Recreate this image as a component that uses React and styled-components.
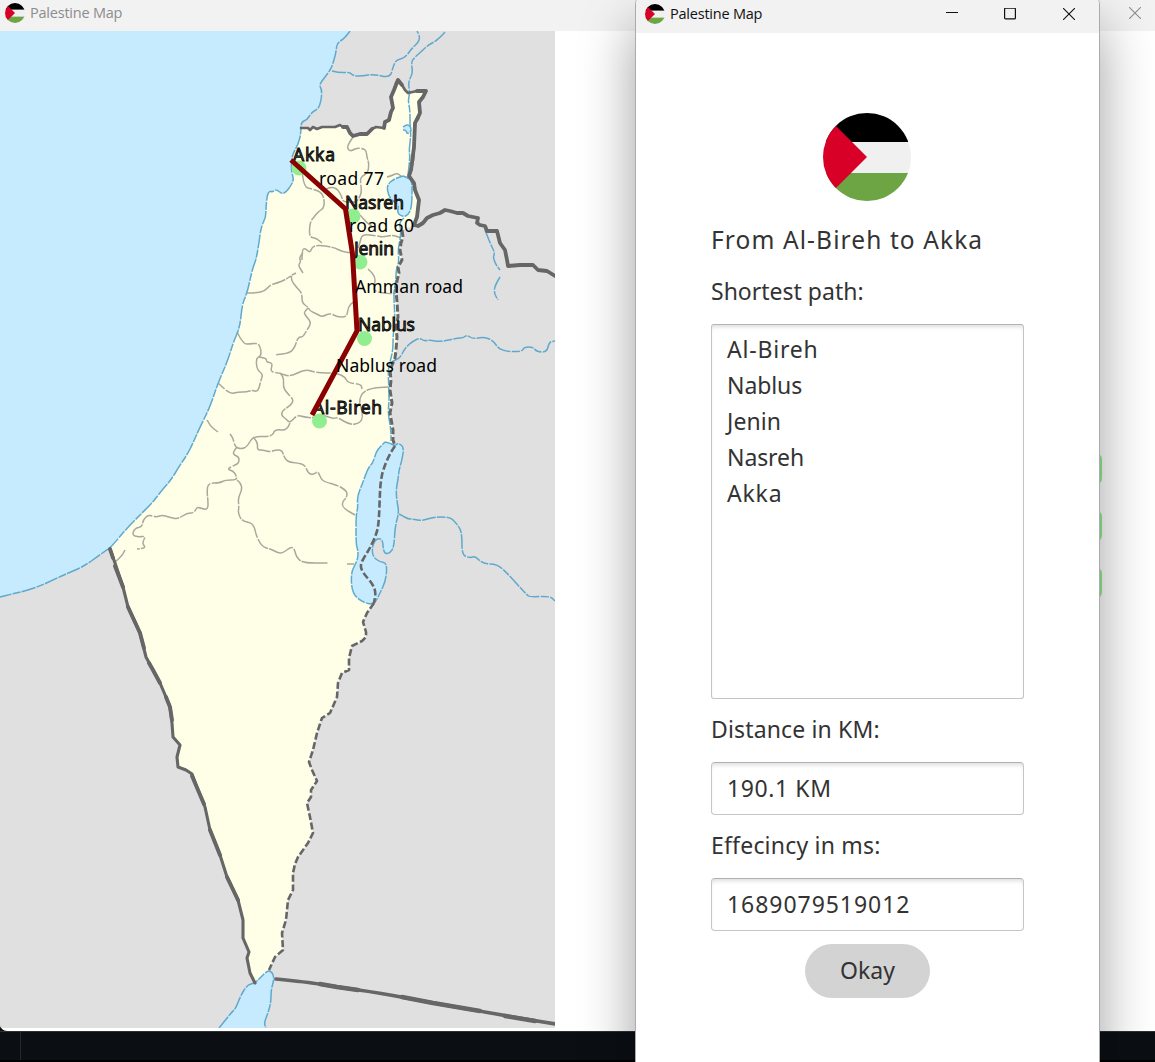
import React from "react";
import styled, { createGlobalStyle } from "styled-components";

const GlobalStyle = createGlobalStyle`
  *, *::before, *::after { box-sizing: border-box; }
  body { margin: 0; overflow: hidden; background: #0b0f14; font-family: "Noto Sans", "Open Sans", sans-serif; }
`;

const Desktop = styled.div`
  position: relative;
  width: 1155px;
  height: 1062px;
  overflow: hidden;
  display: flex;
  flex-direction: column;
  background: #0b0f14;
`;

const MainWindow = styled.section`
  height: 1031px;
  flex: none;
  display: flex;
  flex-direction: column;
  background: #fff;
  border-radius: 0 0 0 7px;
  overflow: hidden;
`;

const Taskbar = styled.footer`
  flex: 1;
  display: flex;
  padding-left: 20px;
  border-top: 1px solid #2c3133;
  border-bottom: 2px solid #000;
`;

const TaskbarDivider = styled.div`
  width: 1px;
  background: #23282d;
`;

const TitleBar = styled.header`
  height: ${(p) => p.$height}px;
  flex: none;
  display: flex;
  align-items: center;
  padding: ${(p) => p.$padding};
  background: #f2f2f2;
  color: ${(p) => (p.$active ? "#111" : "#8d8d8d")};
`;

const Title = styled.h1`
  margin: 0 auto 0 5px;
  font-family: "Open Sans", sans-serif;
  font-size: 14.5px;
  font-weight: 400;
  line-height: 20px;
  letter-spacing: -0.22px;
`;

const Controls = styled.div`
  display: flex;
  gap: 46px;
`;

const ControlButton = styled.span`
  display: flex;
  margin-left: ${(p) => p.$offset || 0}px;
`;

const Workspace = styled.div`
  flex: 1;
  display: flex;
  align-items: flex-start;
`;

const MapCanvas = styled.svg`
  display: block;
  width: 555px;
  height: 997px;
  flex: none;
`;

const SideMenu = styled.nav`
  flex: 1;
  display: flex;
  flex-direction: column;
  align-items: flex-end;
  gap: 21px;
  padding: 420px 53px 0 0;
`;

const MenuButton = styled.button`
  width: 200px;
  height: 36px;
  border: 0;
  border-radius: 9px;
  background: #90ee90;
`;

const Dialog = styled.section`
  position: absolute;
  left: 635px;
  top: -5px;
  width: 465px;
  height: 1100px;
  display: flex;
  flex-direction: column;
  overflow: hidden;
  border: 1px solid #a9abac;
  border-radius: 9px;
  background: #fff;
`;

const DialogShadow = styled.div`
  position: absolute;
  left: 635px;
  top: -5px;
  width: 465px;
  height: 1100px;
  border-radius: 9px;
  box-shadow: 0 30px 54px rgba(0, 0, 0, 0.38);
`;

const DialogBody = styled.div`
  width: 313px;
  margin-left: 75px;
  padding-top: 80px;
  display: flex;
  flex-direction: column;
  color: #333;
`;

const FlagSlot = styled.div`
  display: flex;
  justify-content: center;
  height: 87px;
  padding-right: 1px;
`;

const Text = styled.span`
  font-size: ${(p) => p.$size || 23}px;
  letter-spacing: ${(p) => p.$track || 0}px;
  line-height: 30px;
  white-space: nowrap;
`;

const Heading = styled.div`
  display: flex;
  margin-top: 25px;
`;

const Label = styled.div`
  display: flex;
  margin: ${(p) => p.$margin};
`;

const PathList = styled.ul`
  height: 375px;
  margin: 0;
  padding: 5.5px 15px;
  list-style: none;
  border: 1px solid #c4c4c4;
  border-top-color: #b4b4b4;
  border-radius: 3px;
  box-shadow: inset 0 4px 4px -2px #dedede;
`;

const PathItem = styled.li`
  display: flex;
  align-items: center;
  height: 36.2px;
`;

const Field = styled.div`
  display: flex;
  align-items: center;
  height: 53px;
  padding: 0 15px 2px;
  border: 1px solid #c6c6c6;
  border-top-color: #b0b0b0;
  border-radius: 4px;
  box-shadow: inset 0 4px 4px -2px #dedede;
`;

const OkayButton = styled.button`
  align-self: center;
  width: 125px;
  height: 54px;
  margin-top: 13px;
  padding: 0 0 3px;
  border: 0;
  border-radius: 27px;
  background: #d3d3d3;
  color: #333;
  font-family: inherit;
`;

function Flag({ id, size }) {
  return (
    <svg width={size} height={size} viewBox="0 0 88 88">
      <clipPath id={id}>
        <circle cx="44" cy="44" r="44" />
      </clipPath>
      <g clipPath={`url(#${id})`}>
        <rect width="88" height="88" fill="#f0f0f0" />
        <rect width="88" height="29" fill="#000" />
        <rect y="60" width="88" height="28" fill="#6da544" />
        <path d="M0 0L13 13L44 44L13 75L0 88Z" fill="#d80027" />
      </g>
    </svg>
  );
}

function CloseIcon() {
  return (
    <svg width="12" height="12" viewBox="0 0 12 12" fill="none" stroke="currentColor" strokeWidth="1.1">
      <path d="M0 0L12 12M12 0L0 12" />
    </svg>
  );
}

function MinimizeIcon() {
  return (
    <svg width="12" height="12" viewBox="0 0 12 12" fill="none" stroke="currentColor">
      <path d="M0 4.5H12" />
    </svg>
  );
}

function MaximizeIcon() {
  return (
    <svg width="12" height="12" viewBox="0 0 12 12" fill="none" stroke="currentColor" strokeWidth="1.2">
      <rect x="0.6" y="0.1" width="10.8" height="10.8" rx="1" />
    </svg>
  );
}

const SEA =
  "350,31 345,38 337,43 336,52 334,60 331,69 325,77 319,85 322,90 321,102 318,109 312,112 307,120 301,122 301,133 298,145 292,155 291,170 294,180 290,187 286,192 282,194 276,189 273,192 268,191 266,205 266,217 261,227 259,243 256,260 253,267 250,280 247,293 242,305 240,327 233,343 228,360 218,383 210,407 200,427 193,443 187,455 180,465 171,480 162,490 153,502 143,512 127,528 112,546 108,549 97,557 87,564 78,569 68,573 53,580 40,586 25,591 12,594 0,597";

const LAND_NORTH =
  "301,128 308,128 310,130 313,127 317,129 322,127 335,127 340,125 343,127 347,127 350,133 353,136 360,134 367,134 372,129 376,127 384,128 385,122 389,120 391,112 393,108 391,97 394,90 396,83 398,80 402,85 405,90 408,93 417,91 426,91 423,97 419,102 420,113 418,119 415,123 414,147 413,160 411,170 409,176 414,183 415,190 419,200 417,217 414,225";

const LAND_EAST =
  "402,230 403,237 401,243 400,250 402,260 398,267 399,273 397,281 396,290 397,302 398,317 396,327 397,337 396,350 395,358 390,370 391,380 390,390 392,403 390,413 393,430 393,440 395,446";

const SEA_LINE =
  "395,446 390,453 383,470 381,480 380,490 379,520 377,533 370,548 365,556 360,565 363,573 372,583 376,592 374,603";

const LAND_SOUTHEAST =
  "374,603 367,613 363,622 366,632 366,637 362,641 352,646 349,658 349,670 342,673 338,683 337,697 330,713 322,718 317,733 313,750 309,762 312,770 317,781 311,790 311,797 307,803 310,817 313,833 308,843 298,857 295,864 293,873 293,890 288,900 286,920 282,933 283,950 275,957 269,970";

const LAND_WEST =
  "110,549 115,563 123,587 128,607 134,620 140,633 146,657 153,670 160,683 166,697 170,707 172,723 173,737 180,745 177,757 178,767 186,770 192,774 198,790 205,807 210,830 220,855 227,877 238,900 243,920 243,938 249,952 247,958 250,973 255,983";

const DEAD_SEA =
  "385,442 390,443 395,446 398,443 404,447 402,460 399,470 398,480 396,490 397,502 399,512 395,527 394,547 390,553 385,554 383,548 383,542 380,538 375,540 372,548 373,557 380,562 387,563 386,580 380,593 374,605 362,602 352,593 351,573 355,565 358,558 358,550 356,545 356,515 358,507 357,497 363,482 368,468 373,463 376,452 380,447 385,442";

const GULF =
  "219,1028 227,1018 232,1012 236,1008 240,997 247,985 255,983 260,978 268,970 273,973 274,980 271,990 271,1002 268,1013 264,1023 266,1028";

const RIVERS = [
  "332,71 340,73 350,72 353,76 363,76 373,74 390,78 393,67 396,60 405,58 412,48 418,43 420,37 417,31",
  "445,32 438,40 428,45 422,51 415,57 411,62 413,73 408,82 410,93 408,100 410,110 410,127 411,135 409,150 410,157 408,175",
  "404,218 399,222 401,230 400,240 398,250 399,262 396,270 396,280 394,290 394,302 395,317 393,337 393,350 390,362 388,370 389,390 389,403 388,413 391,430 391,441",
  "390,363 395,360 400,358 405,348 413,341 420,338 424,341 430,340 440,342 457,338 463,338 467,335 473,339 483,337 493,340 500,351 522,352 524,347 533,347 537,352 547,352 549,342 555,341",
  "485,230 490,243 495,253 493,257 496,265 500,270",
  "500,277 495,285 494,293 498,300",
  "399,514 403,516 408,519 413,519 422,521 433,517 450,517 455,522 460,528 462,536 462,555 470,558 475,556 483,564 497,564 507,573 517,584 527,595 530,597 550,596 555,601",
];

const SYRIA_BORDER =
  "414,225 418,226 423,223 427,218 433,215 440,213 445,210 450,211 457,213 463,213 468,216 473,217 478,218 477,223 480,225 485,226 487,231 497,231 500,243 505,250 507,260 508,266 520,265 533,265 538,270 547,271 555,276";

const JORDAN_BORDER = "276,979 307,982 337,987 380,993 433,1003 480,1011 507,1016 555,1024";

const DISTRICTS = [
  "353,137 349,143 347,148 350,151 353,150 357,148 366,149 367,158 369,163 368,173 362,176 360,180 362,193 357,201",
  "302,168 303,187 313,189 323,193 325,207 318,212 314,217 310,222 309,237 316,238 322,243",
  "323,191 328,187 337,188 342,197 343,202 356,202",
  "387,177 391,176 397,173 401,176",
  "357,212 362,217 367,223 372,226",
  "358,248 360,243 362,234 377,236 383,237 393,235 401,238",
  "302,260 302,250 305,248 310,253 312,247 318,245 333,247 343,252 353,253",
  "303,253 299,257 301,262 298,265 303,273",
  "247,293 256,293 265,291 270,285 277,283 285,280 292,275 291,280 297,288 302,293 302,303 308,307 310,311 317,314 322,317 330,313 337,317 347,317 348,307 353,302 357,301",
  "292,275 296,273",
  "368,269 375,275 375,285 373,291 388,294 396,293",
  "308,308 304,312 305,315 311,322 309,327 307,330 303,337 298,337 295,347 290,353 275,355",
  "237,332 243,344 250,344 258,343 261,349 261,356 256,358 257,370 263,374 261,380 258,392 252,390 247,392 238,392 230,394 218,383",
  "258,357 267,358 266,362 273,363 270,372 280,373 290,377 305,369 317,373 337,373 345,377 348,383 361,384 362,389",
  "280,373 284,377 283,387 287,393 294,400 290,406 283,410 281,415 286,419 290,423 297,415 304,417 313,418 323,415 334,419 337,417 350,425 360,423 363,417 361,407 359,400 363,392 372,388 388,387",
  "290,423 287,431 275,429 272,437 253,436 247,447 241,449 235,447 233,438 230,434",
  "207,420 210,426 218,432",
  "237,447 233,452 234,455 239,457 239,463 235,465 227,469 233,471 236,475 237,480 225,480 220,483 208,483 207,492 208,500 208,510 200,508 197,507 194,513 187,513 178,519 172,518 162,515 157,517 152,516 148,515 143,520 142,527 135,528 132,535 138,537 146,536 142,543 146,548 137,549",
  "125,550 123,555 115,562",
  "237,480 241,483 242,490 238,498 239,507 238,513 242,521 252,523 255,529 256,535 262,547 271,549 278,553 283,553 292,546 295,551 296,556 302,563 328,563",
  "347,564 354,564",
  "253,437 258,442 257,450 263,450 270,452 275,450 282,450 284,457 288,462 298,463 305,465 308,473 313,475 318,471 321,479 325,482 337,485 347,491 347,497 342,502 343,508 355,515",
];

// Rounds a point list by running quadratic curves through segment midpoints.
function smooth(points) {
  const p = points.split(" ").map((s) => s.split(",").map(Number));
  let d = `M${p[0]}`;
  for (let i = 1; i < p.length - 1; i += 1) {
    const mid = [(p[i][0] + p[i + 1][0]) / 2, (p[i][1] + p[i + 1][1]) / 2];
    d += `Q${p[i]} ${mid}`;
  }
  return `${d}L${p[p.length - 1]}`;
}

const reversed = (points) => points.split(" ").reverse().join(" ");

const COAST = SEA.split(" ").slice(SEA.split(" ").indexOf("301,133"), SEA.split(" ").indexOf("112,546") + 1).join(" ");

const LAND = [LAND_NORTH, LAND_EAST, SEA_LINE, LAND_SOUTHEAST, reversed(LAND_WEST), reversed(COAST)].join(" ");

const CITIES = [
  { name: "Akka", x: 293, y: 161, w: 42, dot: [299, 168] },
  { name: "Nasreh", x: 345, y: 208.5, w: 59, dot: [353, 216] },
  { name: "Jenin", x: 354, y: 255, w: 40, dot: [360, 262] },
  { name: "Nablus", x: 358, y: 331, w: 57, dot: [364.5, 338.5] },
  { name: "Al-Bireh", x: 313, y: 413.5, w: 69, dot: [319.5, 421] },
];

const ROADS = [
  { name: "road 77", x: 319, y: 185, w: 65 },
  { name: "road 60", x: 349, y: 232, w: 65 },
  { name: "Amman road", x: 355, y: 293, w: 108 },
  { name: "Nablus road", x: 336, y: 372, w: 101 },
];

const CityName = styled.text`
  font-size: 17.5px;
  fill: #4a4a42;
  stroke: #000;
  stroke-width: 0.85px;
`;

const RoadName = styled.text`
  font-size: 17.5px;
  fill: #000;
`;

const District = styled.path`
  fill: none;
  stroke: #a9a89c;
  stroke-width: 1.5;
  stroke-dasharray: 26 1.5 14 1;
`;

const Water = styled.path`
  fill: ${(p) => p.$fill || "none"};
  stroke: #5fa9cd;
  stroke-width: 1.5;
  stroke-dasharray: 14 1.2 8 1.2;
`;

const Border = styled.path`
  fill: none;
  stroke: #666;
  stroke-width: ${(p) => p.$width};
  stroke-linejoin: round;
  stroke-linecap: ${(p) => (p.$dashed ? "butt" : "round")};
  stroke-dasharray: ${(p) => (p.$dashed ? "7 2.6" : "none")};
`;

function RegionMap() {
  return (
    <MapCanvas viewBox="0 31 555 997">
      <rect y="31" width="555" height="997" fill="#e0e0e0" />
      <path d={`${smooth(SEA)}L0,31Z`} fill="#c6ebff" />
      <polygon points={LAND} fill="#ffffe8" />
      {DISTRICTS.map((d) => (
        <District key={d} d={smooth(d)} />
      ))}
      <Water d={smooth(SEA)} />
      {RIVERS.map((r) => (
        <Water key={r} d={smooth(r)} />
      ))}
      <Water
        $fill="#c6ebff"
        d={smooth("403,176 409,178 412,182 412,191 412,200 411,209 408,215 403,217 397,213 399,205 393,201 390,198 387,190 388,184 394,179 403,176")}
      />
      <Water $fill="#c6ebff" d={smooth("403,127 407,124 411,127 411,132 407,134 406,130 403,130")} />
      <Water $fill="#c6ebff" d={smooth(DEAD_SEA)} />
      <Water $fill="#c6ebff" d={smooth(GULF)} />
      <Border $width={2.6} d={`M${LAND_NORTH}`} />
      <Border
        $width={3.8}
        d="M343,127 347,127 350,133 353,136 360,134 367,134 372,129 M384,128 385,122 389,120 391,112 393,108 391,97 394,90 398,80 402,85 M417,91 426,91 423,97 419,102 420,113 415,123 414,147 411,170 409,176 414,183 415,190 419,200 417,217 414,225"
      />
      <Border $width={3.8} d={`M${SYRIA_BORDER}`} />
      <Border $width={3} $dashed d={`M${LAND_EAST}`} />
      <Border $width={2.6} $dashed d={smooth(SEA_LINE)} />
      <Border $width={2.6} $dashed d={`M${LAND_SOUTHEAST}`} />
      <Border $width={3.1} d={`M${LAND_WEST}`} />
      <Border
        $width={3.9}
        d="M110,549 L113,558 M115,566 123,587 M128,607 134,620 140,633 144,648 M149,663 153,670 160,683 M166,697 170,707 172,720 M192,776 198,790 204,804 M210,830 220,855 M227,877 238,900"
      />
      <Border $width={3.7} d={smooth(JORDAN_BORDER)} />
      <Border $width={4.4} d="M320,984 L337,987 358,990 M402,997 L433,1003 480,1011 M505,1016 L535,1021" />
      {CITIES.map((c) => (
        <g key={c.name}>
          <circle cx={c.dot[0]} cy={c.dot[1]} r="7.5" fill="#90ee90" />
          <CityName x={c.x} y={c.y} textLength={c.w}>
            {c.name}
          </CityName>
        </g>
      ))}
      <polyline points="291,160 345.5,209 352.5,254 357,331 312,415" fill="none" stroke="#8b0000" strokeWidth="5" />
      {ROADS.map((r) => (
        <RoadName key={r.name} x={r.x} y={r.y} textLength={r.w}>
          {r.name}
        </RoadName>
      ))}
    </MapCanvas>
  );
}

const STOPS = [
  { name: "Al-Bireh", track: 0.8 },
  { name: "Nablus", track: -0.1 },
  { name: "Jenin", track: 0.1 },
  { name: "Nasreh", track: -0.1 },
  { name: "Akka", track: 0.8 },
];

export default function App() {
  return (
    <>
      <GlobalStyle />
      <Desktop>
        <MainWindow>
          <TitleBar $height={31} $padding="0 14px 6px 5px">
            <Flag id="main-flag" size={20} />
            <Title>Palestine Map</Title>
            <Controls>
              <ControlButton>
                <CloseIcon />
              </ControlButton>
            </Controls>
          </TitleBar>
          <Workspace>
            <RegionMap />
            <SideMenu>
              <MenuButton />
              <MenuButton />
              <MenuButton />
            </SideMenu>
          </Workspace>
        </MainWindow>
        <Taskbar>
          <TaskbarDivider />
        </Taskbar>
        <DialogShadow />
        <Dialog>
          <TitleBar $active $height={37} $padding="0 24px 1px 9px">
            <Flag id="dialog-flag" size={20} />
            <Title>Palestine Map</Title>
            <Controls>
              <ControlButton>
                <MinimizeIcon />
              </ControlButton>
              <ControlButton>
                <MaximizeIcon />
              </ControlButton>
              <ControlButton $offset={1}>
                <CloseIcon />
              </ControlButton>
            </Controls>
          </TitleBar>
          <DialogBody>
            <FlagSlot>
              <Flag id="logo-flag" size={88} />
            </FlagSlot>
            <Heading>
              <Text $size={24.5} $track={1.1}>From Al-Bireh to Akka</Text>
            </Heading>
            <Label $margin="21px 0 18px">
              <Text>Shortest path:</Text>
            </Label>
            <PathList>
              {STOPS.map((s) => (
                <PathItem key={s.name}>
                  <Text $track={s.track}>{s.name}</Text>
                </PathItem>
              ))}
            </PathList>
            <Label $margin="15px 0 18px">
              <Text $track={0.15}>Distance in KM:</Text>
            </Label>
            <Field>
              <Text $track={0.6}>190.1 KM</Text>
            </Field>
            <Label $margin="15px 0 18px">
              <Text $track={0.2}>Effecincy in ms:</Text>
            </Label>
            <Field>
              <Text $track={0.95}>1689079519012</Text>
            </Field>
            <OkayButton>
              <Text>Okay</Text>
            </OkayButton>
          </DialogBody>
        </Dialog>
      </Desktop>
    </>
  );
}
